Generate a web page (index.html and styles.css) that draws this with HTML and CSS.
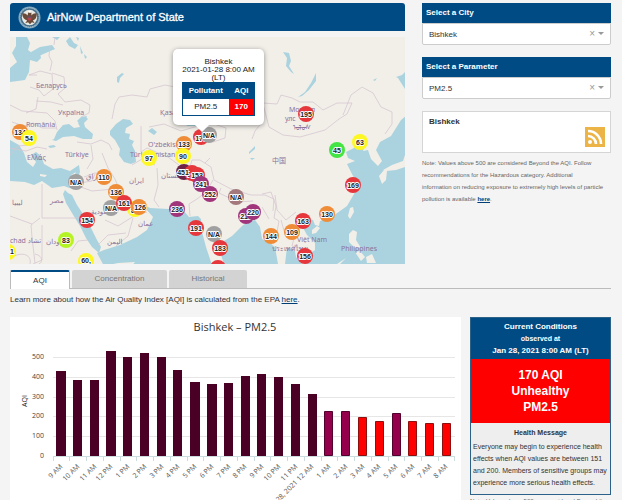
FILE: index.html
```html
<!DOCTYPE html>
<html lang="en">
<head>
<meta charset="utf-8">
<meta name="viewport" content="width=device-width, initial-scale=1">
<title>AirNow Department of State</title>
<link rel="stylesheet" href="styles.css">
</head>
<body>
<main class="page">
  <div class="top">
    <section class="primary">
      <header class="brand">
        <svg class="seal" viewBox="0 0 24 24" aria-hidden="true">
          <circle cx="12" cy="12" r="11.5" fill="#7fa5bd"/>
          <circle cx="12" cy="12" r="10" fill="#456f8b" stroke="#b9cdd5" stroke-dasharray="1 1"/>
          <circle cx="12" cy="12" r="8" fill="#e9e8e1"/>
          <path d="M4.500 8c1-1 4 0 5.500 2l.5-3 2-1.500 1.500 1.500v3c1.500-2 4.500-3 5.500-2 0 4-1 6-4 7l2 3-3-1-2 2-2-2-3 1 2-3c-3-1-5-3-5-7z" fill="#6a4a38"/>
          <path d="M10 11h4v3l-2 2-2-2z" fill="#b5444d"/>
          <path d="M10 11h4v1h-4z" fill="#38567c"/>
          <path d="M11 5h2l1 2h-3z" fill="#fff"/>
        </svg>
        <h1>AirNow Department of State</h1>
      </header>
      <div class="map">
        <svg class="map-art" viewBox="10 37 395 227" preserveAspectRatio="xMidYMid slice" role="img" aria-label="Air quality map">
          <path class="land" d="M10 37h395v227H10z"/>
          <g class="water">
            <path d="M16 37h11l3 6-2 7 4 3 8 1 1 4-4 4-7-2-1 12-4 8-15 2V68l7-6-5-9 4-7z"/>
            <path d="M31 52l9-5 12-2 3 4-7 3-9 4-7-1z"/>
            <path d="M52 37h8l-3 3zM66 41l4-4 4 6 4 2-3 4-6-3zM80 46l3 7-2 1zM84 54l3 3-2 2zM76 37l3 1-1 3z"/>
            <path d="M117 77l5-4 2 1-4 4-1 5-2-1z"/>
            <path d="M54 139l3-7 6-7 6-1 5 4 6-1-2-4 8-6 2 2-4 4 1 4 8 7-1 5-9 0-9-3-11 1-7 4-4-1z"/>
            <path d="M77 121l4-4 6-1-2 4-6 3zM48 146l6-1 2 2-6 1z"/>
            <path d="M110 131l6-7 7-5 7 1 3 4-7 4-1 5 5 1-1 5 5 2-2 4 3 6 1 11-5 2-7-2-5-7 1-6-5-9-5-5z"/>
            <path d="M148 131l4-3 5 4-3 3zM186 126l5-3 13 1-7 2z"/>
            <path d="M10 140l9 5 5 8 3 9 6 5 3-5-5-7 5-3 5 4 3 8 9 5 8-1 9 3 9-6 1 7-4 10-4 7-8-3-12 2-10-7-8 4-9-3-15-1z"/>
            <path d="M65 190l3 3 4 2 5 10 8 12 5 9 7 14 4 7-2 6-7-6-6-9-6-12-8-13-6-10-3-9z"/>
            <path d="M111 187l5 2 3 7 6 6 9 1 6-3 4 6-1 6-5-5-8 3-7-2-5-7-6-7z"/>
            <path d="M97 253l7-3 16-5 17-8 10-7 6-13-7-8-4-5 8 4 19 1 14 1 6 7 9-1 3 3 1 13 4 15 8 24H128l7-9-17 1-14 3z"/>
            <path d="M224 264l-3-9 3-14 8-5 10-10 7-5 6-1 5 7 2 12 8 4 5 4 3 17zM285 264l2-17 8 4 1 6 6 7z"/>
            <path d="M304 264l3-9 8-5 0-7-8-8-5-9 2-8 9 2 2 5 4 1 1-5 13-5 14-10 7-12 4-9-5-9-6-12 8-3-7-3-2-6 8-4 3-6 8 2-2 7 5-1 3 9 7 7 4-5-6-11 4-8 11-6 10-16 5-4v153zM405 72v17l-7-11-2-1 6-2z"/>
            <path d="M298 97l7-5 6-9 5-10v8l-7 9-7 6zM283 52l6 1 2 8-2 5 5 8-3-2-5-6 1-8zM373 80l4-2-2 3zM249 152l6-6 0 3-6 5zM250 158h5l-3 2zM236 107l6-3-2 4z"/>
          </g>
          <g class="island">
            <path d="M350 208l3-1 1 5-4 7-2-3zM312 230l5-4 3 2-4 5-4 1zM379 176l5-6 3 1-1 9-4 4zM383 170l9-5 11-4 2-6v12l-9 3-10 1zM349 234l4-4 4 2-1 8 5 8-6 0-6-6zM355 252l5-1 5 6-4 4zM366 257l6-3 4 9h-9zM346 258l-6 6h-3zM40 174l7 1-2 2-5-1zM71 175l5-3-2 4z"/>
          </g>
          <g class="borders">
            <path d="M37 75l-8 0 11-4 12 3 1 15-9 7-5-6-9-3M52 73l12 4 1 11-7 6 7 8 16-2 9 5-1 8-8 4M38 97l-2 12-10 4m10-12l15 1 12 3M10 105l12 6 13 1 12 1 8 8 2 9M12 122l12 4 9-3 9 5 14 0M50 46l-1 10 3 6-2 9M55 37l-1 8"/>
            <path d="M112 119l3-15 4-7 13-2 15 2 3-8 15-4 10 2 15 0 13-1 10 15 10 3 18 4 14 3 8 10-8 10-3 8M141 126l0 26 6-4 9 4 12 5 11 8M149 127l15-3 17 7 17-5 16-2 12 4-1 10-12 4M263 103l14 1 4-9 11 3 8 4 13 0 10 8 14-7 15 0-5 11-8 5-14 11-25 7-17-2-14-8-6-23M343 115l8-20 11-8 11 6 8 14 11 5 0 12-7 10"/>
            <path d="M181 166l8 4 3-10 8 0 11 7 3 13 17 9 20 6 14 0 9 4-1 12M213 180l-7 12-9 7-8 5 1 12M157 168l1 17-4 15 5 7M221 188l-2 5 19 9 15-1M262 194l9-2 5 14-2 12 5 3-2 11M275 195l2 15 9 10 10-8M281 220l4 14 9 4-2 8 11 3M84 177l11-4 10 1M78 186l14 5 22-2M42 184v34h38M40 218l-9 7 1 12 3 26M10 216l22 8M42 225v35l-9 4M88 240l-10 1-7 10M105 220l13 6 16-10 13-4M133 218l-5 18-12 10M98 245l10-10 18-2"/>
            <path d="M10 155l8-9 13-1M10 148l16 3 11-4 10 2M77 142l14 2 10-4 8 4 3 6M91 145l2 14-6 10M102 153l6 15 7 11 5 12M132 165l10-6 13 6M10 258c14-8 22-2 20 6m5-10c9 2 7 9 4 10M95 174l-3 7-13 2M205 163l5-5M269 219l-7-12"/>
          </g>
          <g class="places">
            <text x="36" y="88">Беларусь</text><text x="58" y="115">Україна</text>
            <text x="26" y="127">România</text><text x="27" y="160">Ελλάς</text>
            <text x="65" y="157">Türkiye</text><text x="160" y="115">Қазақстан</text>
            <text x="148" y="147">O'zbekiston</text><text x="130" y="157">Türkmenistan</text>
            <text x="289" y="112">Монгол</text><text x="285" y="121">улс</text><text x="293" y="130">ᠤᠯᠤᠰ</text>
            <text class="han" x="272" y="163">中国</text><text x="129" y="183">ایران</text>
            <text x="50" y="203">مصر</text><text x="86" y="179">العراق</text>
            <text x="91" y="214">السعودية</text><text x="138" y="226">عمان</text>
            <text x="107" y="244">اليمن</text><text x="46" y="244">السودان</text>
            <text x="12" y="205">ليبيا</text><text x="10" y="243">chad تشاد</text><text x="161" y="178">افغانستان</text>
            <text x="297" y="242">Việt Nam</text><text x="272" y="251">ประเทศไทย</text><text x="341" y="251">Philippines</text>
          </g>
          <g class="markers">
            <g class="orange"><circle cx="20" cy="132" r="8"/><text x="20" y="135">134</text></g>
            <g class="yellow"><circle cx="29" cy="138" r="8"/><text x="29" y="141">54</text></g>
            <g class="gray"><circle cx="76" cy="182" r="8"/><text x="76" y="185">N/A</text></g>
            <g class="orange"><circle cx="104" cy="177" r="8"/><text x="104" y="180">110</text></g>
            <g class="orange"><circle cx="116" cy="192" r="8"/><text x="116" y="195">136</text></g>
            <g class="yellow"><circle cx="135" cy="209" r="8"/><text x="135" y="213">83</text></g>
            <g class="gray"><circle cx="111" cy="208" r="8"/><text x="111" y="211">N/A</text></g>
            <g class="red"><circle cx="124" cy="203" r="8"/><text x="124" y="206">161</text></g>
            <g class="orange"><circle cx="139" cy="207" r="8"/><text x="140" y="210">126</text></g>
            <g class="red"><circle cx="87" cy="220" r="8"/><text x="87" y="223">154</text></g>
            <g class="lime"><circle cx="66" cy="240" r="8"/><text x="66" y="243">83</text></g>
            <g class="yellow"><circle cx="8" cy="252" r="8"/><text x="12" y="254">1</text></g>
            <g class="yellow"><circle cx="86" cy="261" r="8"/><text x="86" y="263">60,</text></g>
            <g class="yellow"><circle cx="149" cy="158" r="8"/><text x="149" y="161">97</text></g>
            <g class="orange"><circle cx="184" cy="144" r="8"/><text x="184" y="147">133</text></g>
            <g class="yellow"><circle cx="183" cy="156" r="8"/><text x="183" y="159">90</text></g>
            <g class="red"><circle cx="201" cy="137" r="8"/><text x="201" y="141">170</text></g>
            <g class="gray"><circle cx="209" cy="135" r="8"/><text x="209" y="138">N/A</text></g>
            <g class="maroon"><circle cx="184" cy="172" r="8"/></g>
            <g class="red"><circle cx="192" cy="173" r="8"/><text x="193" y="177">155</text></g>
            <g class="red"><circle cx="197" cy="175" r="8"/><text x="197" y="178">153</text></g>
            <text x="183" y="175">451</text>
            <g class="purple"><circle cx="201" cy="184" r="8"/><text x="201" y="187">241</text></g>
            <g class="purple"><circle cx="210" cy="194" r="8"/><text x="210" y="197">252</text></g>
            <g class="purple"><circle cx="177" cy="209" r="8"/><text x="177" y="212">236</text></g>
            <g class="red"><circle cx="196" cy="228" r="8"/><text x="196" y="231">191</text></g>
            <g class="mauve"><circle cx="236" cy="197" r="8"/><text x="236" y="200">N/A</text></g>
            <g class="purple"><circle cx="246" cy="216" r="8"/><text x="246" y="219">217</text></g>
            <g class="purple"><circle cx="253" cy="212" r="8"/><text x="253" y="215">220</text></g>
            <g class="gray"><circle cx="214" cy="234" r="8"/><text x="214" y="237">N/A</text></g>
            <g class="red"><circle cx="220" cy="248" r="8"/><text x="220" y="251">183</text></g>
            <g class="red"><circle cx="218" cy="268" r="8"/></g>
            <g class="orange"><circle cx="271" cy="236" r="8"/><text x="271" y="239">144</text></g>
            <g class="red"><circle cx="303" cy="221" r="8"/><text x="303" y="224">163</text></g>
            <g class="orange"><circle cx="292" cy="232" r="8"/><text x="292" y="235">109</text></g>
            <g class="red"><circle cx="305" cy="256" r="8"/><text x="305" y="259">156</text></g>
            <g class="orange"><circle cx="327" cy="214" r="8"/><text x="327" y="217">130</text></g>
            <g class="red"><circle cx="353" cy="185" r="8"/><text x="353" y="188">169</text></g>
            <g class="green"><circle cx="337" cy="150" r="8"/><text x="337" y="153">45</text></g>
            <g class="yellow"><circle cx="360" cy="142" r="8"/><text x="360" y="145">63</text></g>
            <g class="red"><circle cx="306" cy="114" r="8"/><text x="306" y="117">195</text></g>
          </g>
        </svg>
        <div class="popup">
          <p>Bishkek<br>2021-01-28 8:00 AM<br>(LT)</p>
          <table>
            <thead><tr><th class="pollutant">Pollutant</th><th>AQI</th></tr></thead>
            <tbody><tr><td>PM2.5</td><td class="unhealthy">170</td></tr></tbody>
          </table>
        </div>
      </div>
    </section>

    <aside class="filters">
      <div class="field">
        <label for="city">Select a City</label>
        <div class="picker">
          <select id="city"><option>Bishkek</option></select>
          <button type="button" class="clear" aria-label="Clear city">×</button>
          <span class="caret"></span>
        </div>
      </div>
      <div class="field">
        <label for="parameter">Select a Parameter</label>
        <div class="picker">
          <select id="parameter"><option>PM2.5</option></select>
          <button type="button" class="clear" aria-label="Clear parameter">×</button>
          <span class="caret"></span>
        </div>
      </div>
      <div class="feed">
        <strong>Bishkek</strong>
        <a href="#rss" aria-label="RSS feed">
          <svg class="rss" viewBox="0 0 20 20">
            <path d="M0 0h20v20H0z" fill="#ecb347"/>
            <circle cx="5" cy="15" r="2" fill="#fff"/>
            <path d="M3 9a8 8 0 0 1 8 8M3 4a13 13 0 0 1 13 13" fill="none" stroke="#fff" stroke-width="2.6"/>
          </svg>
        </a>
      </div>
      <p class="note">Note: Values above 500 are considered Beyond the AQI. Follow<br>recommendations for the Hazardous category. Additional<br>information on reducing exposure to extremely high levels of particle<br>pollution is available <a href="#exposure">here</a>.</p>
    </aside>
  </div>

  <div class="tabs" role="tablist">
    <button type="button" role="tab" aria-selected="true" class="tab tab-small active">AQI</button>
    <button type="button" role="tab" aria-selected="false" class="tab tab-wide">Concentration</button>
    <button type="button" role="tab" aria-selected="false" class="tab">Historical</button>
  </div>
  <p class="learn">Learn more about how the Air Quality Index [AQI] is calculated from the EPA <a href="#epa">here</a>.</p>

  <div class="bottom">
    <section class="chart">
      <svg viewBox="10 317 451 200" role="img" aria-label="Hourly AQI for Bishkek, PM2.5">
        <text class="chart-title" x="235" y="331">Bishkek – PM2.5</text>
        <path class="grid" d="M53 357.5h402M53 377.5h402M53 397.5h402M53 416.5h402M53 436.5h402"/>
        <path class="axis" d="M53 456.5h402M53.500 456v5M69.500 456v5M86.500 456v5M103.500 456v5M120.500 456v5M136.500 456v5M153.500 456v5M170.500 456v5M187.500 456v5M203.500 456v5M220.500 456v5M237.500 456v5M254.500 456v5M270.500 456v5M287.500 456v5M304.500 456v5M321.500 456v5M337.500 456v5M354.500 456v5M371.500 456v5M388.500 456v5M404.500 456v5M421.500 456v5M438.500 456v5M454.500 456v5"/>
        <g class="scale">
          <text x="44" y="359">500</text><text x="44" y="379">400</text><text x="44" y="399">300</text>
          <text x="44" y="418">200</text><text x="44" y="438">100</text><text x="44" y="458">0</text>
        </g>
        <text class="axis-name" transform="translate(27 401) rotate(-90)">AQI</text>
        <g class="hazardous">
          <path d="M56 371h10v85H56zM73 380h9v76h-9zM90 380h9v76h-9zM106 351h10v105h-10zM123 357h9v99h-9zM140 353h9v103h-9zM157 357h9v99h-9zM173 370h9v86h-9zM190 382h10v74h-10zM207 384h10v72h-10zM224 383h9v73h-9zM241 376h9v80h-9zM257 374h9v82h-9zM274 377h9v79h-9zM291 384h9v72h-9zM308 394h9v62h-9z"/>
        </g>
        <path class="very-unhealthy" d="M324.500 411.500h8v44h-8zM341.500 411.500h8v44h-8zM392.500 413.500h8v42h-8z"/>
        <path class="unhealthy-bars" d="M358.500 417.500h8v38h-8zM375.500 421.500h8v34h-8zM408.500 421.500h8v34h-8zM425.500 423.500h8v32h-8zM442.500 423.500h8v32h-8z"/>
        <g class="hours">
          <text transform="translate(63 467) rotate(-45)">9 AM</text>
          <text transform="translate(80 467) rotate(-45)">10 AM</text>
          <text transform="translate(97 467) rotate(-45)">11 AM</text>
          <text transform="translate(113 467) rotate(-45)">12 PM</text>
          <text transform="translate(130 467) rotate(-45)">1 PM</text>
          <text transform="translate(147 467) rotate(-45)">2 PM</text>
          <text transform="translate(164 467) rotate(-45)">3 PM</text>
          <text transform="translate(180 467) rotate(-45)">4 PM</text>
          <text transform="translate(197 467) rotate(-45)">5 PM</text>
          <text transform="translate(214 467) rotate(-45)">6 PM</text>
          <text transform="translate(231 467) rotate(-45)">7 PM</text>
          <text transform="translate(247 467) rotate(-45)">8 PM</text>
          <text transform="translate(264 467) rotate(-45)">9 PM</text>
          <text transform="translate(281 467) rotate(-45)">10 PM</text>
          <text transform="translate(298 467) rotate(-45)">11 PM</text>
          <text transform="translate(314 467) rotate(-45)">28, 2021 12 AM</text>
          <text transform="translate(331 467) rotate(-45)">1 AM</text>
          <text transform="translate(348 467) rotate(-45)">2 AM</text>
          <text transform="translate(365 467) rotate(-45)">3 AM</text>
          <text transform="translate(381 467) rotate(-45)">4 AM</text>
          <text transform="translate(398 467) rotate(-45)">5 AM</text>
          <text transform="translate(415 467) rotate(-45)">6 AM</text>
          <text transform="translate(432 467) rotate(-45)">7 AM</text>
          <text transform="translate(448 467) rotate(-45)">8 AM</text>
        </g>
      </svg>
    </section>
    <aside class="conditions">
      <div class="card">
        <div class="card-head"><h2>Current Conditions</h2><p class="observed">observed at</p><p>Jan 28, 2021 8:00 AM (LT)</p></div>
        <div class="level">170 AQI<br>Unhealthy<br>PM2.5</div>
        <div class="message"><h3>Health Message</h3><p>Everyone may begin to experience health effects when AQI values are between 151 and 200. Members of sensitive groups may experience more serious health effects.</p></div>
      </div>
      <p class="note footnote">Note: Values above 500 are considered Beyond the AQI.</p>
    </aside>
  </div>
</main>
</body>
</html>
```
FILE: styles.css
```css
* { box-sizing: border-box; }
html { overflow: hidden; background: #f4f4f4; }
body { margin: 0; color: #333; font: 8px/12px "Liberation Sans", Arial, sans-serif; }
h1, h2, h3, p { margin: 0; }
a { color: #003e73; }
button { font: inherit; border: 0; padding: 0; }
svg { display: block; }

.page { padding: 3px 11px 0 10px; }
.top { display: grid; grid-template-columns: 395fr 189fr; gap: 17px; }

.brand { display: flex; align-items: center; gap: 6px; height: 28px; padding: 0 8px; margin-bottom: 6px; border-radius: 3px 3px 0 0; background: #004b84; color: #fff; }
.brand h1 { font-size: 11px; line-height: 16px; font-weight: 400; -webkit-text-stroke: 0.3px #fff; }
.seal { width: 23px; height: 23px; }

.map { position: relative; overflow: hidden; }
.map-art { width: 100%; }
.land { fill: #f2efe9; }
.island { fill: #f2efe9; }
.water { fill: #aad3df; }
.borders { fill: none; stroke: #d6c6d0; stroke-width: 0.8; }
.places { fill: #8b749b; font: 7px "Noto Sans", "DejaVu Sans", sans-serif; }
.places .han { font-family: "Noto Sans CJK SC", sans-serif; }
.markers { font: bold 7px "Liberation Sans", Arial, sans-serif; text-anchor: middle; }
.markers text { fill: #222; stroke: #fff; stroke-width: 2px; stroke-linejoin: round; paint-order: stroke; }
.red { fill: #e5373c; }
.orange { fill: #ef8c38; }
.yellow { fill: #fdf824; }
.lime { fill: #b5f424; }
.green { fill: #43e443; }
.gray { fill: #a0a0a0; }
.mauve { fill: #a3797d; }
.purple { fill: #a0357b; }
.maroon { fill: #6d2447; }

.popup { position: absolute; top: 12px; left: 163px; padding: 9px; border-radius: 5px; background: #fff; box-shadow: 0 1px 5px rgba(0, 0, 0, 0.4); color: #222; text-align: center; }
.popup::after { content: ""; position: absolute; top: 100%; left: 22px; border: 7px solid transparent; border-top-color: #fff; border-bottom: 0; }
.popup p { font-size: 8px; line-height: 8px; }
.popup table { width: 73px; border: 1px solid #004b84; border-collapse: collapse; table-layout: fixed; font-size: 8px; line-height: 12px; }
.popup th { padding: 2px 0; background: #004b84; color: #fff; }
.popup .pollutant { width: 46px; }
.popup td { padding: 2px 0; }
.popup .unhealthy { background: #f00; color: #fff; font-weight: 700; }

.field { margin-bottom: 12px; }
.field label { display: block; height: 20px; padding: 0 4px; background: #004b84; color: #fff; font-weight: 700; line-height: 20px; }
.picker { position: relative; }
.picker select { display: block; width: 100%; height: 22px; padding: 0 6px; border: 1px solid #ccc; border-radius: 0 0 2px 2px; background: #fff; color: #333; font: 8px "Liberation Sans", Arial, sans-serif; appearance: none; }
.clear { position: absolute; top: 4px; right: 16px; background: none; color: #999; font-size: 10px; line-height: 14px; }
.caret { position: absolute; top: 9px; right: 7px; border: 3px solid transparent; border-top-color: #999; border-bottom: 0; pointer-events: none; }
.feed { display: flex; justify-content: space-between; height: 42px; padding: 4px 5px 5px 6px; border: 1px solid #d5d5d5; background: #fff; }
.feed a { align-self: flex-end; }
.rss { width: 20px; height: 20px; }
.note { padding-top: 4px; color: #666; font-size: 6px; line-height: 12px; }
.note a { font-weight: 700; }

.tabs { display: flex; gap: 2px; height: 19px; margin-top: 6px; border-bottom: 1px solid #bbb; }
.tab { width: 78px; height: 18px; border-radius: 2px 2px 0 0; background: #d3d3d3; color: #777; }
.tab-small { width: 60px; }
.tab-wide { width: 95px; }
.tab.active { height: 19px; border: 1px solid #bbb; border-top: 2px solid #004b84; border-bottom: 0; background: #fff; color: #333; }
.learn { padding: 5px 0 11px; }

.bottom { display: grid; grid-template-columns: minmax(0, 451fr) minmax(0, 141fr); gap: 9px; align-items: start; }
.chart { background: #fff; }
.chart svg { width: 100%; font-family: "Open Sans", "Noto Sans", sans-serif; }
.chart-title { fill: #333; font-size: 11px; text-anchor: middle; }
.grid { stroke: #e6e6e6; }
.axis { stroke: #ccdde0; }
.scale { fill: #444; font-size: 7px; text-anchor: end; }
.axis-name { fill: #222; font-size: 7px; text-anchor: middle; }
.hazardous { fill: #4a0025; }
.very-unhealthy { fill: #95004c; stroke: #52002d; }
.unhealthy-bars { fill: #f00; stroke: #8c1010; }
.hours { fill: #555; font-size: 7px; text-anchor: end; }

.card { border: 1px solid #2c6288; background: #eee; }
.card-head { padding: 3px 0 2px; background: #004b84; color: #fff; font-weight: 700; text-align: center; }
.card-head h2, .card-head p { font-size: 8px; line-height: 12px; }
.card-head .observed { font-size: 7px; }
.level { padding: 8px 0; background: #f00; color: #fff; font-size: 12px; line-height: 16px; font-weight: 700; text-align: center; }
.message { padding: 4px 2px 5px; }
.message h3 { font-size: 7px; line-height: 12px; text-align: center; }
.message p { padding-top: 2px; font-size: 7px; line-height: 12px; }
.footnote { padding-top: 0; }
```
